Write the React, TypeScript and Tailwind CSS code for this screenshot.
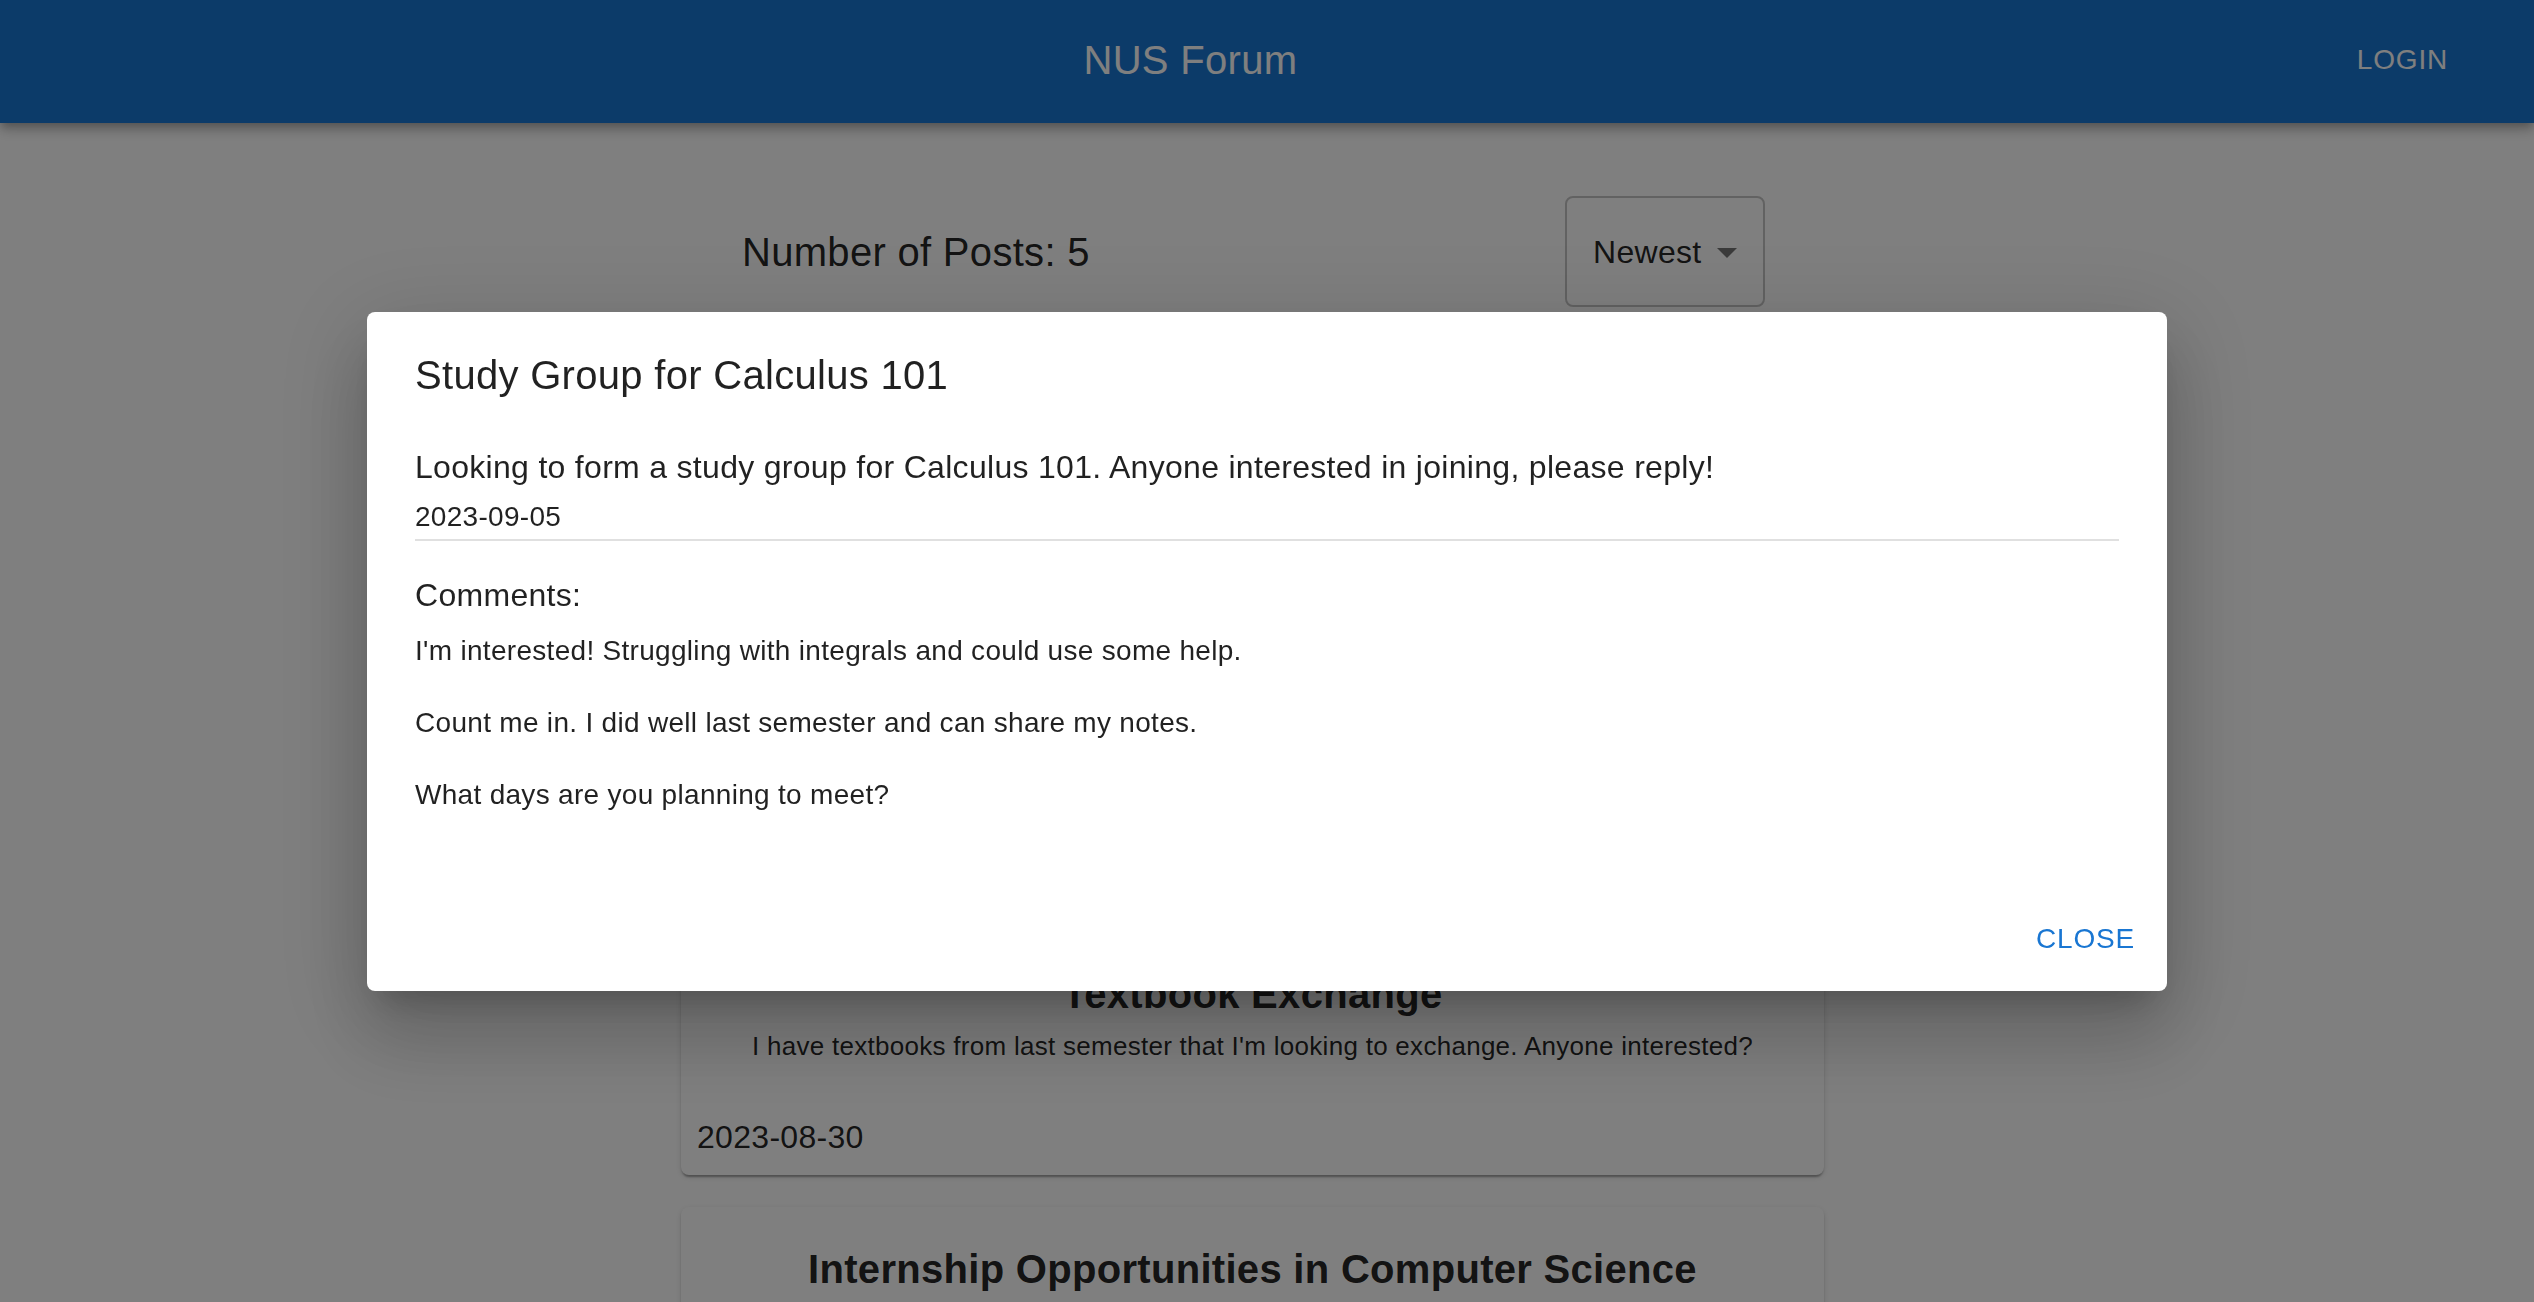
import React from "react";

const posts = [
  {
    title: "Study Group for Calculus 101",
    desc: "Looking to form a study group for Calculus 101. Anyone interested in joining, please reply!",
    date: "2023-09-05",
  },
  {
    title: "Lost Wallet near Central Library",
    desc: "Found a black wallet near the Central Library entrance. Contact me to claim it.",
    date: "2023-09-02",
  },
  {
    title: "Textbook Exchange",
    desc: "I have textbooks from last semester that I'm looking to exchange. Anyone interested?",
    date: "2023-08-30",
  },
  {
    title: "Internship Opportunities in Computer Science",
    desc: "Sharing a list of companies currently offering internships for CS students.",
    date: "2023-08-25",
  },
  {
    title: "Best Food Spots on Campus",
    desc: "What are your favourite places to eat around campus?",
    date: "2023-08-20",
  },
];

const comments = [
  "I'm interested! Struggling with integrals and could use some help.",
  "Count me in. I did well last semester and can share my notes.",
  "What days are you planning to meet?",
];

function PostCard({ title, desc, date }: { title: string; desc: string; date: string }) {
  return (
    <div className="bg-white rounded-[8px] px-[16px] pt-[30px] pb-[14px] text-black/[0.87] shadow-[0px_4px_2px_-2px_rgba(0,0,0,0.2),0px_2px_2px_0px_rgba(0,0,0,0.14),0px_2px_6px_0px_rgba(0,0,0,0.12)]">
      <h2 className="text-center font-bold text-[40px] leading-[64px] tracking-[0.0075em]">{title}</h2>
      <p className="text-center text-[26px] leading-[40px] tracking-[0.01071em]">{desc}</p>
      <p className="mt-[47px] text-[32px] leading-[48px] tracking-[0.00938em]">{date}</p>
    </div>
  );
}

export default function App() {
  return (
    <div className="h-screen overflow-hidden bg-white font-['Liberation_Sans',Arial,Helvetica,sans-serif]">
      <header className="h-[123px] bg-[#1976d2] flex items-center pl-[40px] pr-[70px] pb-[4px] text-white shadow-[0px_4px_8px_-2px_rgba(0,0,0,0.2),0px_8px_10px_0px_rgba(0,0,0,0.14),0px_2px_20px_0px_rgba(0,0,0,0.12)] relative z-10">
        <div className="flex-1 text-center text-[40px] leading-[64px] tracking-[0.0075em]">NUS Forum</div>
        <button className="px-[16px] py-[12px] text-[28px] leading-[49px] tracking-[0.02857em] uppercase">
          Login
        </button>
      </header>

      <div className="flex justify-center pr-[29px]">
        <main className="w-[1143px]">
          <div className="mt-[73px] flex items-center justify-between pl-[61px] pr-[59px]">
            <h1 className="text-[40px] leading-[64px] tracking-[0.0075em] text-black/[0.87]">Number of Posts: 5</h1>
            <div className="relative w-[200px] h-[111px] border-2 border-black/[0.23] rounded-[8px] flex items-center pl-[26px]">
              <span className="text-[32px] leading-[46px] text-black/[0.87] tracking-[0.00938em]">Newest</span>
              <svg
                viewBox="0 0 24 24"
                width="48"
                height="48"
                className="absolute right-[12px] top-1/2 -translate-y-1/2"
              >
                <path d="M7 10l5 5 5-5z" fill="rgba(0,0,0,0.54)" />
              </svg>
            </div>
          </div>

          <div className="mt-[75px] flex flex-col gap-[32px]">
            {posts.map((p) => (
              <PostCard key={p.title} {...p} />
            ))}
          </div>
        </main>
      </div>

      {/* Backdrop + dialog */}
      <div className="fixed inset-0 z-20 bg-black/50 flex items-center justify-center">
        <div className="w-[1800px] bg-white rounded-[8px] text-black/[0.87] shadow-[0px_22px_30px_-14px_rgba(0,0,0,0.2),0px_48px_76px_6px_rgba(0,0,0,0.14),0px_18px_92px_16px_rgba(0,0,0,0.12)] flex flex-col">
          <h2 className="px-[48px] pt-[31px] pb-[32px] text-[40px] leading-[64px] tracking-[0.0075em]">
            Study Group for Calculus 101
          </h2>
          <div className="px-[48px] pb-[55px]">
            <p className="mt-[4px] text-[32px] leading-[48px] tracking-[0.00938em]">
              Looking to form a study group for Calculus 101. Anyone interested in joining, please reply!
            </p>
            <p className="mt-[6px] text-[28px] leading-[40px] tracking-[0.01071em]">2023-09-05</p>
            <div className="mt-[2px] h-[2px] bg-black/[0.12]" />
            <h3 className="mt-[33px] text-[32px] leading-[43px] tracking-[0.00938em]">Comments:</h3>
            <ul className="-mt-[2px]">
              {comments.map((c) => (
                <li key={c} className="py-[16px] text-[28px] leading-[40px] tracking-[0.01071em]">
                  {c}
                </li>
              ))}
            </ul>
          </div>
          <div className="flex justify-end p-[16px]">
            <button className="px-[16px] py-[12px] text-[28px] leading-[49px] tracking-[0.02857em] uppercase text-[#1976d2]">
              Close
            </button>
          </div>
        </div>
      </div>
    </div>
  );
}
